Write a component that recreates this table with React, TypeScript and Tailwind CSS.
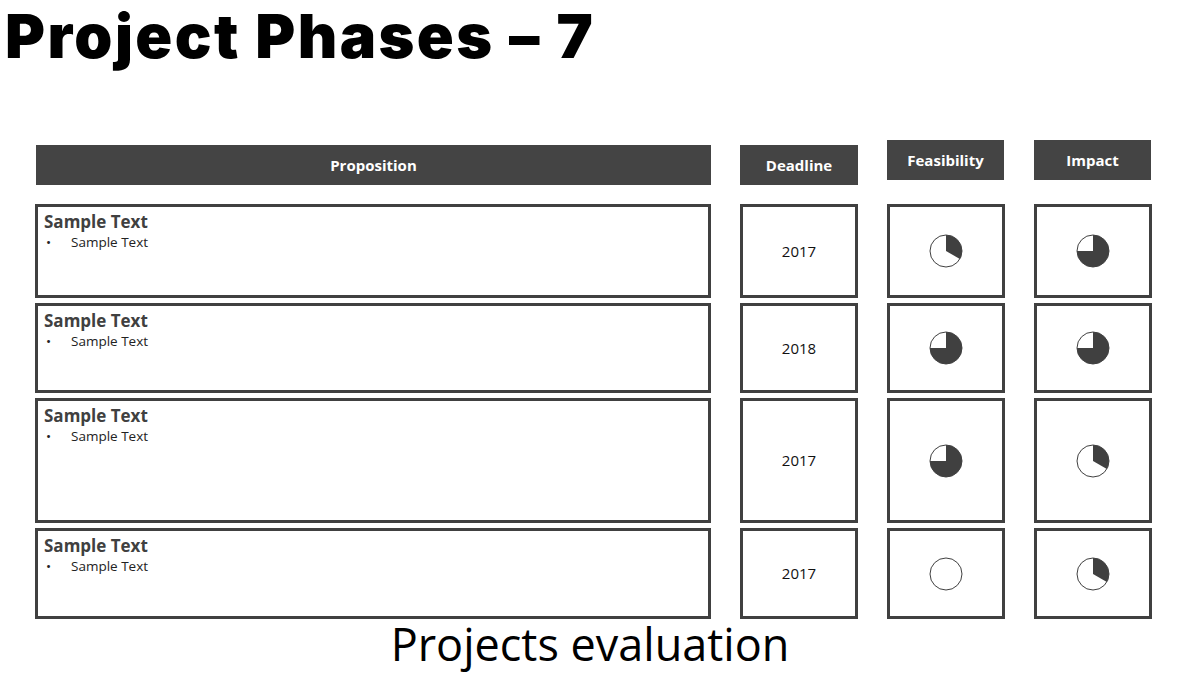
const rows = [
  { h: "h-[94px]", year: "2017", feas: 120, impact: 270 },
  { h: "h-[90px]", year: "2018", feas: 270, impact: 270 },
  { h: "h-[125px]", year: "2017", feas: 270, impact: 120 },
  { h: "h-[91px]", year: "2017", feas: 0, impact: 120 },
];

function Pie({ deg }: { deg: number }) {
  const r = 16;
  const a = (deg * Math.PI) / 180;
  const x = 17 + r * Math.sin(a);
  const y = 17 - r * Math.cos(a);
  const large = deg > 180 ? 1 : 0;
  return (
    <svg width="34" height="34" viewBox="0 0 34 34">
      <circle cx="17" cy="17" r={r} fill="#fff" stroke="#404040" strokeWidth="1" />
      {deg > 0 && (
        <path d={`M17 17 L17 1 A16 16 0 ${large} 1 ${x} ${y} Z`} fill="#404040" />
      )}
    </svg>
  );
}

function Head({ label, className }: { label: string; className: string }) {
  return (
    <div
      className={`flex items-center justify-center bg-[#444444] text-white text-[15px] font-bold h-[40px] ${className}`}
    >
      {label}
    </div>
  );
}

export default function App() {
  return (
    <div className="w-[1180px] h-[673px] bg-white overflow-hidden font-['Open_Sans',sans-serif] relative">
      <h1 className="pl-[5px] text-[61px] leading-[72px] font-black tracking-[2.4px] text-black font-['Inter',sans-serif]">
        Project Phases – 7
      </h1>

      <div className="ml-[35px] mt-[68px] grid grid-cols-[676px_118px_118px_118px] gap-x-[29px]">
        <Head label="Proposition" className="mt-[5px] ml-[1px]" />
        <Head label="Deadline" className="mt-[5px]" />
        <Head label="Feasibility" className="w-[117px]" />
        <Head label="Impact" className="w-[117px]" />
      </div>

      <div className="ml-[35px] mt-[19px] flex flex-col gap-[5px]">
        {rows.map((r, i) => (
          <div key={i} className={`grid grid-cols-[676px_118px_118px_118px] gap-x-[29px] ${r.h}`}>
            <div className="border-[3px] border-[#404040] px-[6px] pt-[4px] text-[#404040]">
              <div className="text-[17px] font-bold leading-[22px]">Sample Text</div>
              <div className="flex text-[13.5px] text-[#222] leading-[18px]">
                <span className="w-[27px] pl-[2px]">•</span>
                <span>Sample Text</span>
              </div>
            </div>
            <div className="border-[3px] border-[#404040] flex items-center justify-center text-[15px] text-[#111]">
              {r.year}
            </div>
            <div className="border-[3px] border-[#404040] flex items-center justify-center">
              <Pie deg={r.feas} />
            </div>
            <div className="border-[3px] border-[#404040] flex items-center justify-center">
              <Pie deg={r.impact} />
            </div>
          </div>
        ))}
      </div>

      <div className="pt-[1px] text-center text-[45px] leading-[48px] text-black font-['Open_Sans',sans-serif]">
        Projects evaluation
      </div>
    </div>
  );
}
